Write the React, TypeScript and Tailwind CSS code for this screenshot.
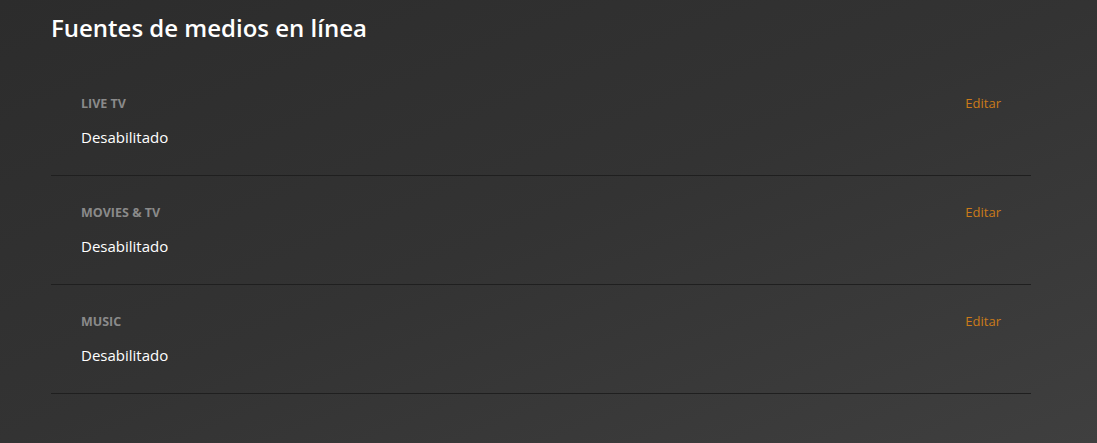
const sources = [
  { label: 'Live TV', value: 'Desabilitado' },
  { label: 'Movies & TV', value: 'Desabilitado' },
  { label: 'Music', value: 'Desabilitado' },
];

function SourceRow({ label, value }: { label: string; value: string }) {
  return (
    <div className="flex items-start justify-between border-b border-[#1f1f1f] pl-[30px] pr-[30px] pt-[29px] h-[109px]">
      <div className="flex flex-col">
        <span className="text-[12.5px] font-bold uppercase leading-4 text-[#8a8a8a]">{label}</span>
        <span className="mt-[15px] text-[15px] leading-5 text-white">{value}</span>
      </div>
      <button className="-mt-px text-[13px] leading-4 text-[#cc7b19] hover:text-[#e5a00d]">Editar</button>
    </div>
  );
}

export default function App() {
  return (
    <div
      className="min-h-[443px] w-full bg-gradient-to-br from-[#2c2c2c] via-[#333333] to-[#3f3f3f] px-[51px] pt-[12px]"
      style={{ fontFamily: '"Open Sans", "Noto Sans", sans-serif' }}
    >
      <h1 className="text-[24px] font-semibold leading-[32px] text-white">Fuentes de medios en línea</h1>
      <div className="mt-[23px] w-[980px]">
        {sources.map((s) => (
          <SourceRow key={s.label} label={s.label} value={s.value} />
        ))}
      </div>
    </div>
  );
}
